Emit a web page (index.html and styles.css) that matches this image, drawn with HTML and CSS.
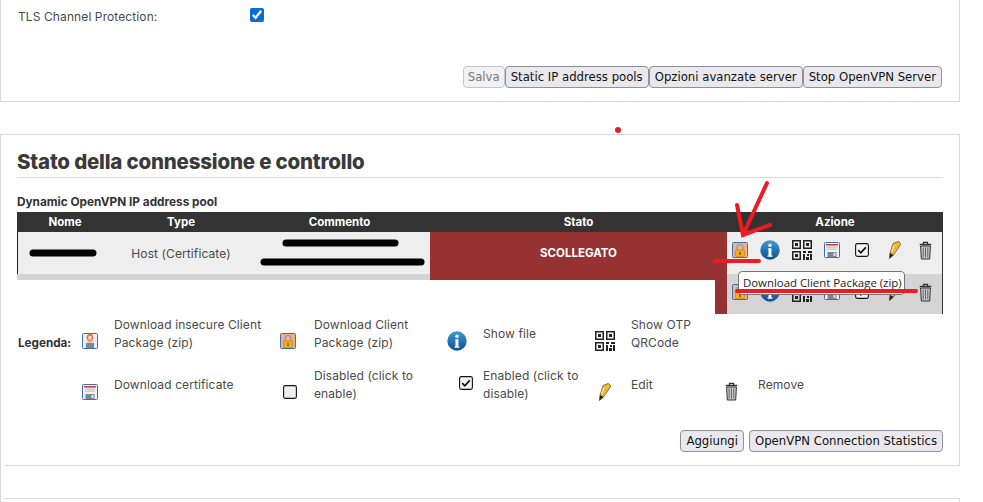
FILE: index.html
```html
<!DOCTYPE html>
<html lang="it">
<head>
<meta charset="utf-8">
<title>OpenVPN</title>
<link rel="stylesheet" href="styles.css">
</head>
<body>
<svg class="defs" width="0" height="0" aria-hidden="true">
  <defs>
    <linearGradient id="gBlue" x1="0" y1="0" x2="0" y2="1"><stop offset="0" stop-color="#3f9ad6"/><stop offset="1" stop-color="#0d4f8c"/></linearGradient>
    <symbol id="i-insecure" viewBox="0 0 16 16">
      <rect x=".5" y=".5" width="15" height="15" rx="1" fill="#e9eef5" stroke="#3f70ae"/>
      <rect x="4" y="10" width="8" height="5" fill="#7d8794"/>
      <circle cx="8" cy="4.500" r="2.600" fill="none" stroke="#e0792e" stroke-width="1.600"/>
      <rect x="5.500" y="6" width="5" height="3.400" fill="#e8a063"/>
    </symbol>
    <symbol id="i-secure" viewBox="0 0 16 16">
      <rect x=".5" y=".5" width="15" height="15" rx="1" fill="#f0b089" stroke="#3f70ae"/>
      <path d="M5 8V5.500a3 3 0 0 1 6 0V8" fill="none" stroke="#a0a0a0" stroke-width="1.600"/>
      <rect x="3.500" y="8" width="9" height="6.500" rx=".5" fill="#f2b01e" stroke="#b97f10" stroke-width=".6"/>
      <rect x="7.300" y="10" width="1.400" height="3" fill="#7a5208"/>
    </symbol>
    <symbol id="i-info" viewBox="0 0 20 20">
      <circle cx="10" cy="10" r="9.700" fill="url(#gBlue)"/>
      <circle cx="10" cy="5.200" r="1.700" fill="#fff"/>
      <path d="M8.200 8.200h3.200v7.400h1.100v1.100h-5v-1.100h1V9.300h-.3z" fill="#fff"/>
    </symbol>
    <symbol id="i-qr" viewBox="0 0 20 20">
      <path fill="#222" fill-rule="evenodd" d="M0 0h9v9H0zM1.500 1.500v6h6v-6zM11 0h9v9h-9zM12.500 1.500v6h6v-6zM0 11h9v9H0zM1.500 12.500v6h6v-6z"/>
      <path fill="#222" d="M3 3h3v3H3zM14 3h3v3h-3zM3 14h3v3H3zM11 11h3v2h-3zM16 11h4v2h-4zM11 14h2v6h-2zM15 14h2v2h-2zM18 14h2v6h-2zM14 17h3v3h-3z"/>
    </symbol>
    <symbol id="i-cert" viewBox="0 0 16 16">
      <rect x=".5" y=".5" width="15" height="15" rx="1" fill="#eef1f6" stroke="#3f70ae"/>
      <rect x="2" y="2" width="12" height="1.600" fill="#d8402f"/>
      <path d="M3 5.200h10M3 7.200h10" stroke="#b9bec6"/>
      <rect x="3.500" y="10" width="9" height="5" fill="#7d8794"/>
      <rect x="9.500" y="11" width="2" height="3" fill="#dfe3e8"/>
    </symbol>
    <symbol id="i-on" viewBox="0 0 14 14">
      <rect x=".6" y=".6" width="12.800" height="12.800" rx="1.800" fill="#f4f4f4" stroke="#111" stroke-width="1.100"/>
      <path d="M3.200 7.200l2.600 2.600 5-5.400" fill="none" stroke="#111" stroke-width="1.700"/>
    </symbol>
    <symbol id="i-off" viewBox="0 0 14 14">
      <rect x=".6" y=".6" width="12.800" height="12.800" rx="1.800" fill="#eee" stroke="#111" stroke-width="1.100"/>
    </symbol>
    <symbol id="i-edit" viewBox="0 0 12 18">
      <path d="M4 2.500L9 .5c1.400.4 2.500 1.500 2.700 3L4.500 14 .5 17.500 1 12z" fill="#e8b93a" stroke="#5d4a18" stroke-width=".7"/>
      <path d="M1 12l3.500 2-4 3.500z" fill="#222"/>
      <path d="M5 4.500L2.600 11" stroke="#fbe79a" stroke-width="1.300"/>
    </symbol>
    <symbol id="i-trash" viewBox="0 0 13 19">
      <path d="M.7 3.500h11.600M4.500 3V1.300h4V3" fill="none" stroke="#333" stroke-width="1.300"/>
      <path d="M1.600 5h9.800l-.7 13H2.300z" fill="#c9c9c9" stroke="#333" stroke-width="1"/>
      <path d="M4.200 6.500v10M6.500 6.500v10M8.800 6.500v10" stroke="#666" stroke-width="1"/>
    </symbol>
  </defs>
</svg>

<main class="page">
  <section class="panel panel-top">
    <div class="tls-row">
      <label class="tls-label" for="tls">TLS Channel Protection:</label>
      <input id="tls" class="tls-check" type="checkbox" checked>
    </div>
    <div class="btn-row btn-row-tight">
      <button class="btn btn-save" disabled>Salva</button>
      <button class="btn">Static IP address pools</button>
      <button class="btn">Opzioni avanzate server</button>
      <button class="btn">Stop OpenVPN Server</button>
    </div>
  </section>

  <section class="panel panel-main">
    <h2 class="title">Stato della connessione e controllo</h2>
    <h3 class="subtitle">Dynamic OpenVPN IP address pool</h3>
    <div class="table">
      <div class="th">Nome</div><div class="th">Type</div><div class="th">Commento</div><div class="th">Stato</div><div class="th">Azione</div>

      <div class="td td-a td-first"></div>
      <div class="td td-a">Host (Certificate)</div>
      <div class="td td-a"></div>
      <div class="td td-status">SCOLLEGATO</div>
      <div class="td td-a actions">
        <svg class="ic16"><use href="#i-secure"/></svg>
        <svg class="ic20"><use href="#i-info"/></svg>
        <svg class="ic20"><use href="#i-qr"/></svg>
        <svg class="ic16"><use href="#i-cert"/></svg>
        <svg class="ic14"><use href="#i-on"/></svg>
        <svg class="ic-edit"><use href="#i-edit"/></svg>
        <svg class="ic-trash"><use href="#i-trash"/></svg>
      </div>

      <div class="td td-b"></div>
      <div class="td td-b"></div>
      <div class="td td-b"></div>
      <div class="td td-status-2"></div>
      <div class="td td-b actions">
        <svg class="ic16"><use href="#i-secure"/></svg>
        <svg class="ic20"><use href="#i-info"/></svg>
        <svg class="ic20"><use href="#i-qr"/></svg>
        <svg class="ic16"><use href="#i-cert"/></svg>
        <svg class="ic14"><use href="#i-on"/></svg>
        <svg class="ic-edit"><use href="#i-edit"/></svg>
        <svg class="ic-trash"><use href="#i-trash"/></svg>
      </div>
    </div>

    <div class="legend">
      <strong class="legend-label">Legenda:</strong>
      <svg class="ic16 lg-i1"><use href="#i-insecure"/></svg>
      <span class="lg-t">Download insecure Client Package (zip)</span>
      <svg class="ic16 lg-i2"><use href="#i-secure"/></svg>
      <span class="lg-t">Download Client Package (zip)</span>
      <svg class="ic20 lg-i3"><use href="#i-info"/></svg>
      <span class="lg-t">Show file</span>
      <svg class="ic20 lg-i4"><use href="#i-qr"/></svg>
      <span class="lg-t">Show OTP QRCode</span>
      <span></span>
      <span></span>

      <span></span>
      <svg class="ic16 lg-i1"><use href="#i-cert"/></svg>
      <span class="lg-t">Download certificate</span>
      <svg class="ic14 lg-i2b"><use href="#i-off"/></svg>
      <span class="lg-t">Disabled (click to enable)</span>
      <svg class="ic14 lg-i3b"><use href="#i-on"/></svg>
      <span class="lg-t">Enabled (click to disable)</span>
      <svg class="ic-edit lg-i4b"><use href="#i-edit"/></svg>
      <span class="lg-t">Edit</span>
      <svg class="ic-trash lg-i5"><use href="#i-trash"/></svg>
      <span class="lg-t">Remove</span>
    </div>

    <div class="btn-row">
      <button class="btn">Aggiungi</button>
      <button class="btn">OpenVPN Connection Statistics</button>
    </div>
  </section>

  <section class="panel panel-next"></section>
</main>

<div class="patch"></div>
<svg class="marks" width="983" height="502" aria-hidden="true">
  <g stroke="#000" stroke-linecap="round" fill="none" stroke-width="7">
    <path d="M33 253H93"/>
    <path d="M286 243H395"/>
    <path d="M264 262H421"/>
  </g>
  <g stroke="#ed1c24" stroke-linecap="round" fill="none" stroke-width="4">
    <path d="M767 183L743 235M737 205L743 235L770 225"/>
    <path d="M715 261H759"/>
  </g>
  <circle cx="618" cy="130" r="3" fill="#ed1c24"/>
</svg>
<div class="tooltip">Download Client Package (zip)</div>
<svg class="marks" width="983" height="502" aria-hidden="true">
  <path d="M737 291H916" stroke="#ed1c24" stroke-width="4" stroke-linecap="round"/>
</svg>
</body>
</html>
```
FILE: styles.css
```css
* { box-sizing: border-box; }
html, body { margin: 0; height: 502px; overflow: hidden; background: #fff; }
body { position: relative; font-family: Inter, sans-serif; font-size: 12px; letter-spacing: .1px; color: #4a4a4a; }
body::before { content: ""; position: absolute; left: 0; top: 134px; bottom: 0; width: 1px; background: #d8d8d8; }
.defs { position: absolute; }
.page { width: 960px; }
.panel { border: 1px solid #d8d8d8; background: #fff; }
.panel-top { height: 102px; border-top: 0; padding: 9px 17px 0 17px; }
.tls-row { display: flex; height: 50px; }
.tls-label { width: 232px; padding-top: 1px; line-height: 14px; }
.tls-check { margin: -1px 0 0; width: 14px; height: 14px; accent-color: #0b6bd6; }
.btn-row { display: flex; justify-content: flex-end; gap: 5px; }
.btn-row-tight { gap: 0; margin-top: 7px; }
.btn { height: 22px; padding: 0 5px; font: 11.7px/20px "DejaVu Sans", sans-serif; letter-spacing: 0; color: #111; background: #e9e9ed; border: 1px solid #8f8f9d; border-radius: 4px; }
.btn:disabled { color: #777; background: #f2f2f5; border-color: #c4c4cc; }
.btn-save { padding: 0 4px; }
.panel-main { position: relative; height: 332px; margin-top: 32px; padding: 0 16px; border-bottom: 0; }
.panel-main::after { content: ""; position: absolute; left: 4px; right: 0; bottom: 0; height: 1px; background: #d8d8d8; }
.title { margin: 0; height: 43px; padding-top: 15px; border-bottom: 1px solid #d8d8d8; font: 800 20.5px/24px Inter, sans-serif; letter-spacing: -.2px; color: #3a3a3a; }
.subtitle { margin: 17px 0 3px; font: bold 11.8px/14px Inter, sans-serif; letter-spacing: 0; color: #333; }
.table { display: grid; grid-template-columns: 96px 136px 181px 297px 216px; grid-template-rows: 20px 42px 40px; }
.th { background: #333; color: #fff; font-weight: 700; font-size: 11.5px; letter-spacing: 0; text-align: center; line-height: 20px; }
.td { display: flex; align-items: center; justify-content: center; }
.td-a { background: #eee; }
.td-first { border-left: 1px solid #222; }
.td-b { background: #d4d4d4; }
.td-status, .td-status-2 { background: #973232; color: #fff; font-weight: 700; font-size: 11.5px; letter-spacing: 0; }
.actions { justify-content: flex-start; padding-left: 5px; border-right: 1px solid #333; }
.td-a.actions { padding-bottom: 6px; }
.td-b.actions { padding-bottom: 4px; }
.ic16 { width: 16px; height: 16px; flex: none; }
.ic20 { width: 20px; height: 20px; flex: none; }
.ic14 { width: 14px; height: 14px; flex: none; }
.ic-edit { width: 12px; height: 18px; flex: none; }
.ic-trash { width: 13px; height: 19px; flex: none; }
.actions .ic20:nth-child(2) { margin-left: 12px; }
.actions .ic20:nth-child(3) { margin-left: 12px; }
.actions .ic16:nth-child(4) { margin-left: 12px; }
.actions .ic14 { margin-left: 15px; }
.actions .ic-edit { margin-left: 20px; }
.actions .ic-trash { margin-left: 18px; }
.legend { display: grid; grid-template-columns: 61px 36px 164px 36px 130px 39px 109px 39px 91px 36px 80px; grid-template-rows: 36px 36px; row-gap: 15px; align-items: center; margin-top: 2px; line-height: 18px; }
.legend-label { align-self: start; margin-top: 18px; font-weight: 700; color: #333; padding-left: 1px; font-size: 11.7px; letter-spacing: 0; }
.lg-t { padding-right: 6px; }
.legend svg { align-self: start; }
.legend .lg-i1 { margin: 17px 0 0 4px; }
.legend .lg-i2 { margin: 17px 0 0 2px; }
.legend .lg-i2b { margin: 18px 0 0 5px; }
.legend .lg-i3 { margin: 15px 0 0 3px; }
.legend .lg-i3b { margin: 9px 0 0 15px; }
.legend .lg-i4 { margin: 15px 0 0 3px; }
.legend .lg-i4b { margin: 16px 0 0 7px; }
.legend .lg-i5 { margin: 15px 0 0 3px; }
.panel-main .btn-row { margin-top: 27px; }
.panel-next { height: 30px; margin-top: 32px; margin-left: 4px; border-bottom: 0; border-left: 0; }
.patch { position: absolute; left: 17px; top: 280px; width: 698px; height: 34px; background: #fff; }
.marks { position: absolute; left: 0; top: 0; pointer-events: none; }
.tooltip { position: absolute; left: 738px; top: 271px; width: 167px; height: 24px; padding-left: 4px; font: 11.4px/22px "Open Sans", sans-serif; letter-spacing: 0; color: #222; background: #fff; border: 1px solid #767676; border-radius: 4px; white-space: nowrap; }
```
